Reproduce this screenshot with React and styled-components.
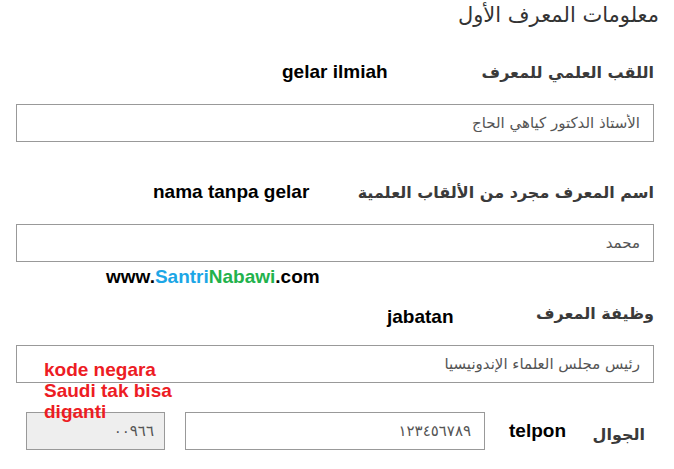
import styled, { createGlobalStyle } from "styled-components"

const GlobalStyle = createGlobalStyle`
    * { box-sizing: border-box; }
    body {
        margin: 0;
        background: #ffffff;
        font-family: "DejaVu Sans", sans-serif;
    }
`

export default function App () {
    return (
        <>
            <GlobalStyle />
            <Page>
                <Title dir="rtl">معلومات المعرف الأول</Title>

                <Section $top={27}>
                    <LabelRow>
                        <Note $left={266}>gelar ilmiah</Note>
                        <Label dir="rtl">اللقب العلمي للمعرف</Label>
                    </LabelRow>
                    <Field dir="rtl" readOnly value="الأستاذ الدكتور كياهي الحاج" />
                </Section>

                <Section $top={35}>
                    <LabelRow>
                        <Note $left={137}>nama tanpa gelar</Note>
                        <Label dir="rtl">اسم المعرف مجرد من الألقاب العلمية</Label>
                    </LabelRow>
                    <Field dir="rtl" readOnly value="محمد" />
                </Section>

                <Watermark>
                    www.<Blue>Santri</Blue><Green>Nabawi</Green>.com
                </Watermark>

                <Section $top={9}>
                    <LabelRow>
                        <Note $left={371} $low>jabatan</Note>
                        <Label dir="rtl">وظيفة المعرف</Label>
                    </LabelRow>
                    <Field dir="rtl" readOnly value="رئيس مجلس العلماء الإندونيسيا" />
                </Section>

                <PhoneRow>
                    <RedNote>kode negara<br />Saudi tak bisa<br />diganti</RedNote>
                    <CodeBox dir="rtl" readOnly value="٠٠٩٦٦" />
                    <PhoneField dir="rtl" readOnly value="١٢٣٤٥٦٧٨٩" />
                    <Note $left={4}>telpon</Note>
                    <PhoneLabel dir="rtl">الجوال</PhoneLabel>
                </PhoneRow>
            </Page>
        </>
    )
}

//Styled Components//
const Page = styled.div`
    width: 674px;
    padding: 0 20px 0 16px;
`

const Title = styled.h1`
    margin: 0 -5px 0 0;
    height: 30px;
    line-height: 30px;
    font-size: 21px;
    font-weight: normal;
    color: #333;
    text-align: right;
`

const Section = styled.section`
    display: flex;
    flex-direction: column;
    gap: 17px;
    margin-top: ${props => props.$top}px;
`

const LabelRow = styled.div`
    display: flex;
    align-items: center;
    height: 30px;
`

const Label = styled.span`
    margin-left: auto;
    font-size: 16px;
    font-weight: bold;
    color: #3a3a3a;
`

const Note = styled.span`
    margin-left: ${props => props.$left}px;
    align-self: ${props => (props.$low ? "flex-end" : "center")};
    font-family: "Liberation Sans", Arial, sans-serif;
    font-size: 19px;
    font-weight: bold;
    color: #000;
`

const Field = styled.input`
    display: block;
    width: 100%;
    height: 38px;
    padding: 0 13px;
    border: 1px solid #999;
    border-radius: 0;
    background: #fff;
    font-family: "DejaVu Sans", sans-serif;
    font-size: 15px;
    color: #555;
    outline: none;
`

const Watermark = styled.div`
    height: 24px;
    margin-top: 3px;
    padding-left: 90px;
    line-height: 24px;
    font-family: "Liberation Sans", Arial, sans-serif;
    font-size: 19px;
    font-weight: bold;
    color: #000;
`

const Blue = styled.span`
    color: #1ca6e6;
`

const Green = styled.span`
    color: #22b24c;
`

const PhoneRow = styled.div`
    position: relative;
    display: flex;
    align-items: center;
    gap: 20px;
    height: 38px;
    margin-top: 29px;
    padding-left: 10px;
`

const CodeBox = styled(Field)`
    width: 139px;
    padding: 0 10px;
    background: #eeeeee;
    font-size: 15px;
`

const PhoneField = styled(Field)`
    width: 300px;
`

const PhoneLabel = styled(Label)`
    margin-right: 9px;
    padding-top: 6px;
`

const RedNote = styled.div`
    position: absolute;
    top: -53px;
    left: 28px;
    z-index: 2;
    font-family: "Liberation Sans", Arial, sans-serif;
    font-size: 19px;
    font-weight: bold;
    line-height: 21px;
    color: #ed1c24;
    pointer-events: none;
`
